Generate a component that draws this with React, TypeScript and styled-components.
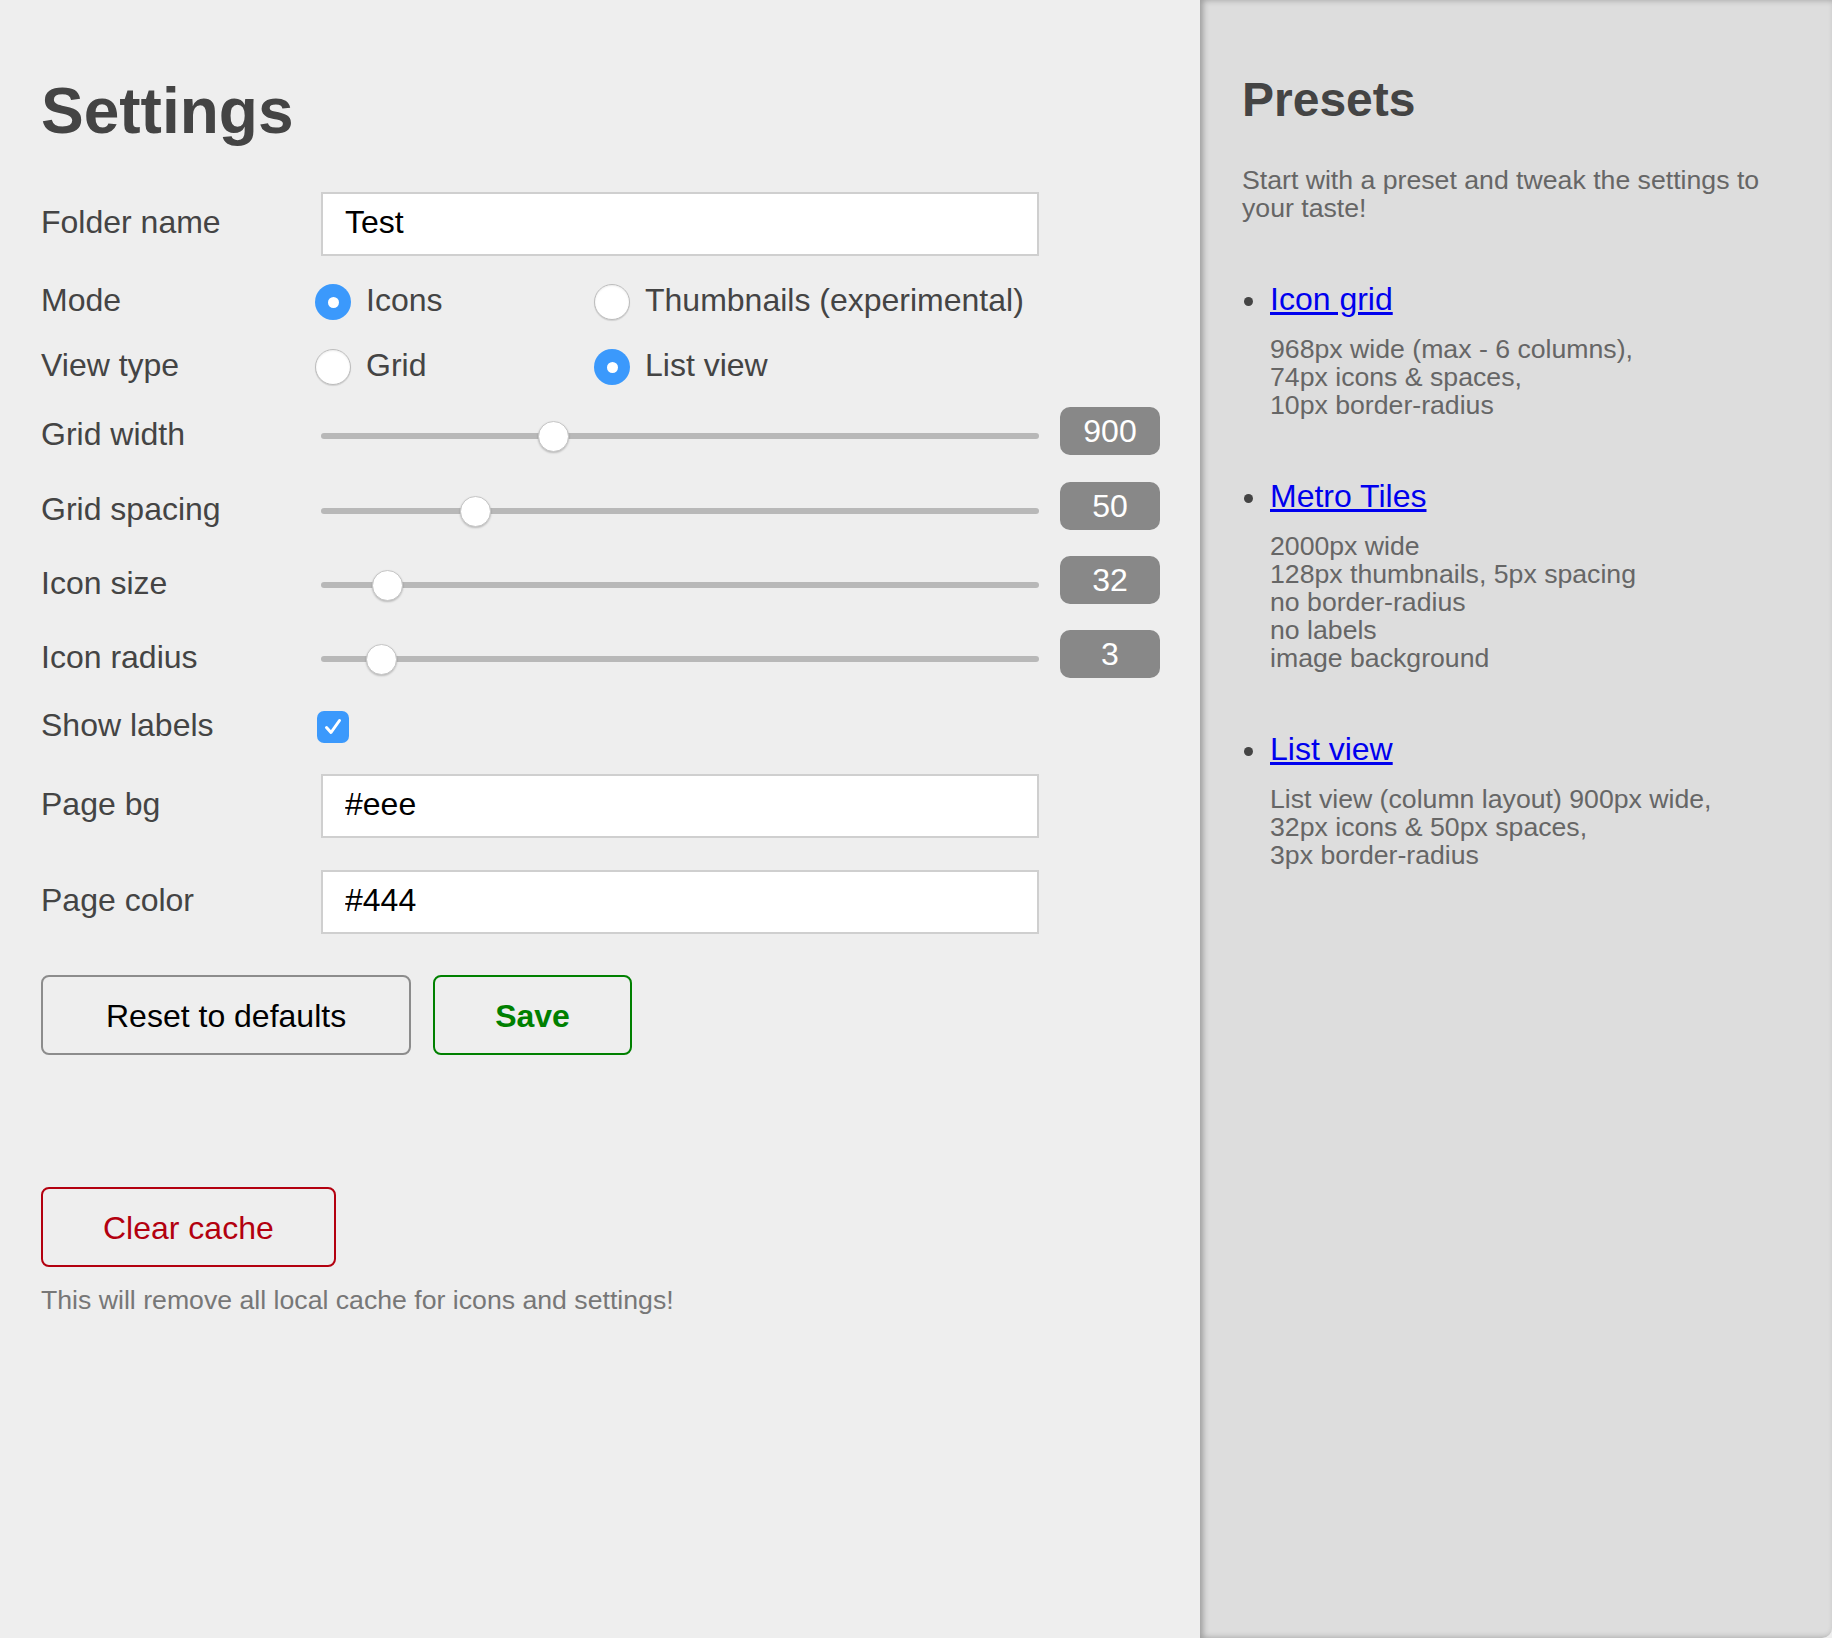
import React from "react";
import styled, { createGlobalStyle } from "styled-components";

const GlobalStyle = createGlobalStyle`
  html, body { margin: 0; padding: 0; }
  body {
    background: #eee;
    font-family: "Liberation Sans", Arial, Helvetica, sans-serif;
    color: #444;
  }
  * { box-sizing: border-box; }
`;

const Page = styled.div`
  display: grid;
  grid-template-columns: 1200px 632px;
  min-height: 1638px;
`;

const Main = styled.main`
  padding: 79px 0 0 41px;
  background: #eee;
`;

const Title = styled.h1`
  margin: 0;
  font-size: 64px;
  line-height: 64px;
  font-weight: bold;
  color: #444;
`;

const Row = styled.div<{ $h: number; $mt: number }>`
  display: grid;
  grid-template-columns: 280px 718px 121px;
  align-items: center;
  height: ${(p) => p.$h}px;
  margin-top: ${(p) => p.$mt}px;
`;

const Label = styled.label<{ $shift?: number }>`
  position: relative;
  top: ${(p) => p.$shift ?? -2}px;
  font-size: 32px;
  line-height: 36px;
  color: #444;
`;

const TextInput = styled.input`
  width: 718px;
  height: 64px;
  border: 2px solid #cfcfcf;
  background: #fff;
  padding: 0 22px 4px;
  font-family: inherit;
  font-size: 32px;
  color: #000;
  outline: none;
`;

const RadioGroup = styled.div`
  display: grid;
  grid-template-columns: 279px auto;
  margin-left: -6px;
`;

const RadioOption = styled.label`
  display: flex;
  align-items: center;
  gap: 15px;
  font-size: 32px;
  line-height: 36px;
  color: #444;
  white-space: nowrap;
`;

const RadioText = styled.span`
  position: relative;
  top: -2px;
`;

const RadioCircle = styled.span<{ $checked: boolean }>`
  flex: none;
  width: 36px;
  height: 36px;
  border-radius: 50%;
  display: flex;
  align-items: center;
  justify-content: center;
  background: ${(p) => (p.$checked ? "#3b99fc" : "#fff")};
  border: ${(p) => (p.$checked ? "none" : "1px solid #bdbdbd")};
  box-shadow: ${(p) =>
    p.$checked
      ? "none"
      : "inset 0 1px 2px rgba(0,0,0,0.08), 0 1px 1px rgba(0,0,0,0.12)"};
  &::after {
    content: "";
    display: ${(p) => (p.$checked ? "block" : "none")};
    width: 11px;
    height: 11px;
    border-radius: 50%;
    background: #fff;
  }
`;

const SliderTrack = styled.div`
  position: relative;
  top: 5px;
  width: 718px;
  height: 6px;
  border-radius: 3px;
  background: #b8b8b8;
`;

const SliderThumb = styled.span`
  position: absolute;
  top: 50%;
  width: 31px;
  height: 31px;
  margin-top: -15.5px;
  margin-left: -15.5px;
  border-radius: 50%;
  background: #fff;
  border: 1px solid #c6c6c6;
  box-shadow: 0 1px 2px rgba(0, 0, 0, 0.22);
`;

const ValueBadge = styled.output`
  margin-left: 21px;
  width: 100px;
  height: 48px;
  border-radius: 10px;
  background: #888;
  color: #fff;
  font-size: 32px;
  display: flex;
  align-items: center;
  justify-content: center;
`;

const CheckBox = styled.span`
  width: 32px;
  height: 32px;
  margin-left: -4px;
  border-radius: 7px;
  background: #3b99fc;
  display: flex;
  align-items: center;
  justify-content: center;
`;

const ButtonRow = styled.div<{ $mt: number }>`
  display: flex;
  gap: 22px;
  margin-top: ${(p) => p.$mt}px;
`;

type Variant = "neutral" | "save" | "danger";

const variantStyle: Record<Variant, { border: string; text: string; pad: number }> = {
  neutral: { border: "#8c8c8c", text: "#000", pad: 63 },
  save: { border: "#008000", text: "#008000", pad: 60 },
  danger: { border: "#b3000f", text: "#b3000f", pad: 60 },
};

const Button = styled.button<{ $variant: Variant }>`
  height: 80px;
  padding: 2px ${(p) => variantStyle[p.$variant].pad}px 0;
  border: 2px solid ${(p) => variantStyle[p.$variant].border};
  border-radius: 8px;
  background: transparent;
  color: ${(p) => variantStyle[p.$variant].text};
  font-family: inherit;
  font-size: 32px;
  font-weight: ${(p) => (p.$variant === "save" ? "bold" : "normal")};
  cursor: pointer;
`;

const Note = styled.p`
  margin: 17px 0 0;
  font-size: 26.67px;
  line-height: 32px;
  color: #777;
`;

const Sidebar = styled.aside`
  background: #ddd;
  padding: 76px 42px 0 42px;
  box-shadow: inset 3px 0 6px rgba(0, 0, 0, 0.3);
  border-bottom-right-radius: 10px;
`;

const SideTitle = styled.h2`
  margin: 0;
  font-size: 48px;
  line-height: 48px;
  font-weight: bold;
  color: #444;
`;

const Intro = styled.p`
  margin: 42px 0 0;
  font-size: 26.67px;
  line-height: 28px;
  color: #666;
`;

const PresetList = styled.ul`
  margin: 59px 0 0;
  padding-left: 28px;
  list-style: none;
  font-size: 26.67px;
  line-height: 36px;
  color: #444;
`;

const PresetItem = styled.li`
  position: relative;
  &::before {
    content: "";
    position: absolute;
    left: -26px;
    top: 16px;
    width: 9px;
    height: 9px;
    border-radius: 50%;
    background: #444;
  }
  & + & {
    margin-top: 59px;
  }
`;

const PresetLink = styled.a`
  font-size: 32px;
  color: #0000ee;
  text-decoration: underline;
`;

const PresetDesc = styled.div`
  margin-top: 16px;
  font-size: 26.67px;
  line-height: 28px;
  color: #666;
`;

type SliderDef = {
  label: string;
  value: number;
  min: number;
  max: number;
  mt: number;
};

const sliders: SliderDef[] = [
  { label: "Grid width", value: 900, min: 400, max: 2000, mt: 22 },
  { label: "Grid spacing", value: 50, min: 0, max: 250, mt: 27 },
  { label: "Icon size", value: 32, min: 16, max: 240, mt: 26 },
  { label: "Icon radius", value: 3, min: 0, max: 48, mt: 26 },
];

const presets = [
  {
    name: "Icon grid",
    lines: ["968px wide (max - 6 columns),", "74px icons & spaces,", "10px border-radius"],
  },
  {
    name: "Metro Tiles",
    lines: [
      "2000px wide",
      "128px thumbnails, 5px spacing",
      "no border-radius",
      "no labels",
      "image background",
    ],
  },
  {
    name: "List view",
    lines: [
      "List view (column layout) 900px wide,",
      "32px icons & 50px spaces,",
      "3px border-radius",
    ],
  },
];

function Slider({ def }: { def: SliderDef }) {
  const usable = 718 - 31;
  const left = 17.5 + ((def.value - def.min) / (def.max - def.min)) * usable;
  return (
    <Row $h={48} $mt={def.mt}>
      <Label $shift={3}>{def.label}</Label>
      <SliderTrack>
        <SliderThumb style={{ left: `${left}px` }} />
      </SliderTrack>
      <ValueBadge>{def.value}</ValueBadge>
    </Row>
  );
}

function Radio({ checked, label }: { checked: boolean; label: string }) {
  return (
    <RadioOption>
      <RadioCircle $checked={checked} />
      <RadioText>{label}</RadioText>
    </RadioOption>
  );
}

export default function App() {
  return (
    <>
      <GlobalStyle />
      <Page>
        <Main>
          <Title>Settings</Title>
          <Row $h={64} $mt={49}>
            <Label>Folder name</Label>
            <TextInput defaultValue="Test" />
          </Row>
          <Row $h={36} $mt={28}>
            <Label>Mode</Label>
            <RadioGroup>
              <Radio checked label="Icons" />
              <Radio checked={false} label="Thumbnails (experimental)" />
            </RadioGroup>
          </Row>
          <Row $h={36} $mt={29}>
            <Label>View type</Label>
            <RadioGroup>
              <Radio checked={false} label="Grid" />
              <Radio checked label="List view" />
            </RadioGroup>
          </Row>
          {sliders.map((s) => (
            <Slider key={s.label} def={s} />
          ))}
          <Row $h={32} $mt={31}>
            <Label>Show labels</Label>
            <CheckBox>
              <svg width="22" height="22" viewBox="0 0 22 22" fill="none">
                <path
                  d="M4.5 11.5 L9 16.5 L17.5 4.5"
                  stroke="#fff"
                  strokeWidth="3"
                  strokeLinecap="round"
                  strokeLinejoin="round"
                />
              </svg>
            </CheckBox>
          </Row>
          <Row $h={64} $mt={33}>
            <Label>Page bg</Label>
            <TextInput defaultValue="#eee" />
          </Row>
          <Row $h={64} $mt={32}>
            <Label>Page color</Label>
            <TextInput defaultValue="#444" />
          </Row>
          <ButtonRow $mt={41}>
            <Button $variant="neutral">Reset to defaults</Button>
            <Button $variant="save">Save</Button>
          </ButtonRow>
          <ButtonRow $mt={132}>
            <Button $variant="danger">Clear cache</Button>
          </ButtonRow>
          <Note>This will remove all local cache for icons and settings!</Note>
        </Main>
        <Sidebar>
          <SideTitle>Presets</SideTitle>
          <Intro>Start with a preset and tweak the settings to your taste!</Intro>
          <PresetList>
            {presets.map((p) => (
              <PresetItem key={p.name}>
                <PresetLink href="#">{p.name}</PresetLink>
                <PresetDesc>
                  {p.lines.map((l, i) => (
                    <React.Fragment key={i}>
                      {l}
                      {i < p.lines.length - 1 && <br />}
                    </React.Fragment>
                  ))}
                </PresetDesc>
              </PresetItem>
            ))}
          </PresetList>
        </Sidebar>
      </Page>
    </>
  );
}
